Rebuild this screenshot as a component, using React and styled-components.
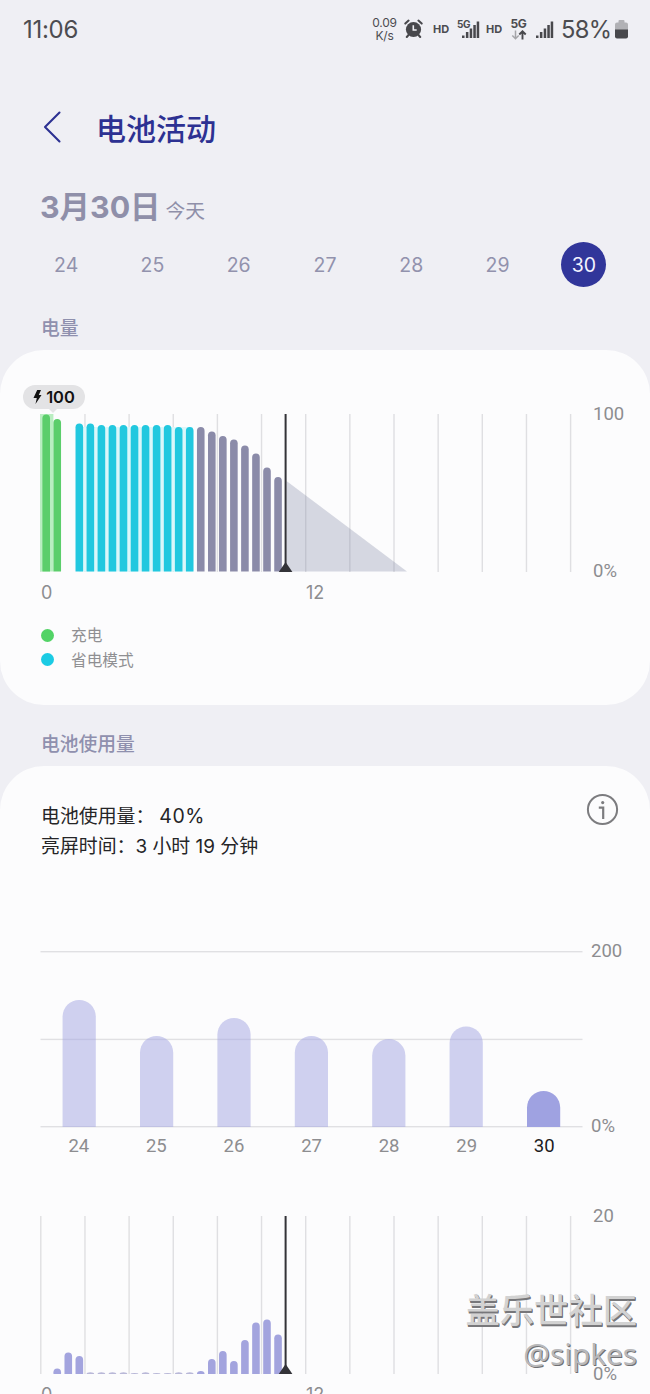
import React from "react";
import styled, { createGlobalStyle } from "styled-components";

const GlobalStyle = createGlobalStyle`
  * {
    box-sizing: border-box;
  }

  body {
    margin: 0;
    background: #efeff4;
    font-family: Inter, "Noto Sans CJK SC", sans-serif;
  }

  svg {
    display: block;
    flex: none;
  }
`;

const Screen = styled.div`
  position: relative;
  width: 650px;
  height: 1394px;
  overflow: hidden;
  display: flex;
  flex-direction: column;
  background: #efeff4;
  white-space: nowrap;

  > * {
    flex-shrink: 0;
  }
`;

const StatusBar = styled.header`
  display: flex;
  align-items: center;
  height: 58px;
  padding: 0 22px 0 23px;
  color: #4c4c50;
`;

const Clock = styled.div`
  flex: 1;
  font-size: 24px;
  letter-spacing: -0.3px;
`;

const NetSpeed = styled.div`
  width: 27px;
  margin-right: 6px;
  font-size: 12px;
  line-height: 13px;
  letter-spacing: -0.2px;
  text-align: center;
`;

const Hd = styled.span`
  width: 17px;
  margin: 0 ${(p) => p.$right}px 0 ${(p) => p.$left}px;
  font-size: 11px;
  font-weight: 700;
`;

const Network = styled.div`
  display: flex;
  align-items: ${(p) => (p.$stacked ? "center" : "flex-start")};
  flex-direction: ${(p) => (p.$stacked ? "column" : "row")};
  width: ${(p) => p.$width}px;
  height: 23px;
  font-size: ${(p) => p.$size}px;
  line-height: 12px;
  font-weight: 700;
  letter-spacing: -0.4px;
`;

const BatteryText = styled.span`
  width: 50px;
  margin: 0 4px 0 7px;
  font-size: 23.7px;
  letter-spacing: -0.6px;
`;

const TitleBar = styled.div`
  display: flex;
  align-items: center;
  height: 140px;
  padding: 0 0 2px 42px;
  color: #2d3192;
`;

const Title = styled.h1`
  margin: 0 0 0 34px;
  font-family: "Noto Sans CJK SC", sans-serif;
  font-size: 30px;
  font-weight: 500;
  line-height: 40px;
`;

const DateHeading = styled.div`
  display: flex;
  align-items: baseline;
  height: 44px;
  margin-top: -13px;
  padding-left: 40px;
  color: #8f8fa9;
  font-size: 30.4px;
  line-height: 44px;
  font-weight: 700;
`;

const Today = styled.span`
  margin-left: 5px;
  font-size: 19.8px;
  font-weight: 400;
`;

const DayPicker = styled.nav`
  display: flex;
  height: 45px;
  margin: 13px 23px 0;
`;

const DayCell = styled.div`
  flex: 1;
  display: flex;
  justify-content: center;
`;

const Day = styled.button`
  width: 45px;
  height: 45px;
  padding: 0;
  border: none;
  border-radius: 50%;
  background: ${(p) => (p.$active ? "#31369a" : "transparent")};
  color: ${(p) => (p.$active ? "#f4f4ff" : "#9292ad")};
  font-family: inherit;
  font-size: 19.5px;
`;

const SectionLabel = styled.h2`
  display: flex;
  align-items: center;
  height: ${(p) => p.$height}px;
  margin: 0;
  padding: ${(p) => p.$top}px 0 0 41px;
  color: #8f90ae;
  font-family: "Noto Sans CJK SC", sans-serif;
  font-size: 18.8px;
  font-weight: 500;
  line-height: 24px;
`;

const Card = styled.section`
  height: ${(p) => p.$height}px;
  padding-top: ${(p) => p.$top}px;
  border-radius: 44px;
  background: #fcfcfd;
`;

const ChartRow = styled.div`
  position: relative;
  display: flex;
  height: ${(p) => p.$height}px;
  padding-left: 40px;
`;

const ValueAxis = styled.div`
  display: flex;
  flex-direction: column;
  justify-content: space-between;
  height: ${(p) => p.$height}px;
  margin: -10px 0 0 ${(p) => p.$left}px;
  color: #8d8d90;
  font-family: Roboto, sans-serif;
  font-size: 18.5px;
  line-height: 20px;
`;

const HourAxis = styled.div`
  display: flex;
  height: 24px;
  margin-top: 9px;
  padding-left: 41px;
  color: #8d8d90;
  font-size: 18px;
  line-height: 24px;
`;

const Hour = styled.span`
  width: 265px;
`;

const Charged = styled.div`
  position: absolute;
  left: 23px;
  top: -29px;
  display: flex;
  align-items: center;
  justify-content: center;
  gap: 4px;
  width: 62px;
  height: 24px;
  border-radius: 12px;
  background: #e3e3e5;
  color: #111;
  font-size: 16.5px;
  font-weight: 600;

  &::after {
    content: "";
    position: absolute;
    left: 26px;
    top: 24px;
    border: 4px solid transparent;
    border-top-color: #e3e3e5;
    border-bottom: none;
  }
`;

const Legend = styled.ul`
  display: flex;
  flex-direction: column;
  margin: 18px 0 0;
  padding: 0 0 0 41px;
  list-style: none;
`;

const LegendItem = styled.li`
  display: flex;
  align-items: center;
  gap: 17px;
  height: 24.6px;
  color: #8f8f92;
  font-family: "Noto Sans CJK SC", sans-serif;
  font-size: 15.7px;
  line-height: 24px;
`;

const Dot = styled.span`
  width: 13px;
  height: 13px;
  border-radius: 50%;
  background: ${(p) => p.$color};
`;

const UsageHeader = styled.div`
  display: flex;
  justify-content: space-between;
  align-items: flex-start;
  height: 158px;
  padding: 0 31px 0 41px;
`;

const UsageText = styled.div`
  margin-top: 9px;
  color: #252527;
  font-size: 18.9px;
  line-height: 29.5px;
`;

const Percent = styled.span`
  margin-left: 5px;
  font-size: 19.5px;
  letter-spacing: 0.5px;
`;

const DayAxis = styled.div`
  display: flex;
  width: 543px;
  height: 24px;
  margin: 6px 0 0 40px;
  font-family: Roboto, sans-serif;
  font-size: 18.5px;
  line-height: 24px;
`;

const DayTick = styled.span`
  flex: 1;
  color: ${(p) => (p.$active ? "#1c1c1e" : "#8d8d90")};
  text-align: center;
`;

const HourlyUsage = styled.div`
  margin-top: 58px;
`;

const Watermark = styled.div`
  position: absolute;
  right: 13px;
  top: 1285px;
  display: flex;
  flex-direction: column;
  align-items: flex-end;
  color: #d2d2d2;
  font-family: "Noto Sans CJK SC", sans-serif;
  font-size: 34.3px;
  font-weight: 500;
  line-height: 46px;
  text-shadow: 1px 1px 0 #77777a, 1px 2px 0 #77777a;
`;

const WatermarkUser = styled.span`
  font-family: "Noto Sans", sans-serif;
  font-size: 29.7px;
  font-weight: 400;
  color: #b8b8ba;
  text-shadow: 1px 1px 0 #6f6f72;
`;

const days = [24, 25, 26, 27, 28, 29, 30];
const dailyTops = [49, 85, 67, 85, 88, 75.5, 140];

const SLOT = 11.04;
const GREEN = "#5bce6b";
const CYAN = "#22c8df";
const SLATE = "#8b8ba9";

const levels = [
  0.5, 5, null, 9.5, 9.5, 11, 11, 11, 11, 11, 11, 11, 13, 13, 13, 17.5, 22,
  25.5, 31.5, 39.5, 53.5, 63,
];

const hourly = [
  null, 5.5, 21.5, 18, 1.8, 1.8, 1.8, 1.8, 1, 1.8, 1, 1, 1.8, 1.8, 3, 15, 23,
  13, 34, 51.5, 54.5, 39.5,
];

const levelColor = (i) => {
  if (i < 2) return GREEN;
  return i < 14 ? CYAN : SLATE;
};

// bar with a rounded top and a square foot
const barPath = (x, y, w, bottom) => {
  const r = Math.min(w / 2, bottom - y);
  return `M${x} ${bottom}V${y + r}A${w / 2} ${r} 0 0 1 ${x + w} ${y + r}V${bottom}Z`;
};

const GridLines = () =>
  Array.from({ length: 13 }, (_, i) => (
    <rect key={i} x={0.1 + i * 44.15} y="0" width="1.4" height="158" fill="#dfdfe2" />
  ));

const NowMarker = () => (
  <g fill="#333338">
    <rect x="244.6" y="0" width="2" height="155" />
    <path d="M245.6 148L252.4 158H238.8Z" />
  </g>
);

const LevelChart = () => (
  <svg width="543" height="158">
    <GridLines />
    <rect x="0" y="0" width="13.4" height="157.5" fill="#b9eec1" />
    <rect x="39" y="13" width="114" height="144.5" fill="#dbf7fa" />
    <path d="M246.5 67L367 157.5H246.5Z" fill="#8b8fab" fillOpacity="0.34" />
    {levels.map(
      (top, i) =>
        top !== null && (
          <path
            key={i}
            d={barPath(2.4 + i * SLOT, top, 7.6, 157.5)}
            fill={levelColor(i)}
          />
        )
    )}
    <NowMarker />
  </svg>
);

const DailyChart = () => (
  <svg width="543" height="177">
    {[0.5, 88.2, 175.5].map((y) => (
      <rect key={y} x="0.5" y={y - 0.5} width="542" height="1.4" fill="#e0e0e3" />
    ))}
    {dailyTops.map((top, i) => (
      <path
        key={i}
        d={barPath(22.6 + i * 77.4, top, 33.2, 176)}
        fill={i === 6 ? "#9fa2e1" : "#a4a6e2"}
        fillOpacity={i === 6 ? 1 : 0.52}
      />
    ))}
  </svg>
);

const HourlyChart = () => (
  <svg width="543" height="158">
    <GridLines />
    {hourly.map(
      (h, i) =>
        h !== null && (
          <path
            key={i}
            d={barPath(2.4 + i * SLOT, 158 - h, 7.6, 158)}
            fill={h < 2 ? "#b9b8d8" : "#a3a4de"}
          />
        )
    )}
    <NowMarker />
  </svg>
);

const AlarmIcon = () => (
  <svg width="19" height="20" viewBox="0 0 19 20">
    <circle cx="9.5" cy="10.5" r="7.6" fill="#48484c" />
    <path d="M1.3 4.6L4.6 1.6M17.7 4.6L14.4 1.6M4.5 16L2.8 18M14.5 16L16.2 18" stroke="#48484c" strokeWidth="2" strokeLinecap="round" />
    <path d="M9.3 6.3V11H12.7" fill="none" stroke="#efeff4" strokeWidth="1.6" />
  </svg>
);

const SignalBars = styled.svg`
  margin: 2px 0 0 ${(p) => p.$left}px;
  fill: #48484c;
`;

const SignalIcon = ({ left }) => (
  <SignalBars $left={left} width="18" height="18" viewBox="0 0 18 18">
    <rect x="0" y="14.5" width="2.5" height="2.5" />
    <rect x="3.9" y="11" width="2.5" height="6" />
    <rect x="7.7" y="7.5" width="2.5" height="9.5" />
    <rect x="11.3" y="4" width="2.5" height="13" />
    <rect x="14.7" y="0.5" width="2.5" height="16.5" />
  </SignalBars>
);

const DataArrows = () => (
  <svg width="16" height="10" viewBox="0 0 16 10" fill="none">
    <path d="M4.5 0.5V8.5M1.3 5.5L4.5 8.7L7.7 5.5" stroke="#a5a5a9" strokeWidth="1.5" />
    <path d="M11.5 9.5V1.5M8.3 4.5L11.5 1.3L14.7 4.5" stroke="#48484c" strokeWidth="1.9" />
  </svg>
);

const BatteryIcon = () => (
  <svg width="13" height="19" viewBox="0 0 13 19">
    <path d="M3.5 2.5V1a1 1 0 0 1 1-1h4a1 1 0 0 1 1 1v1.5h1.5a2 2 0 0 1 2 2V10H0V4.5a2 2 0 0 1 2-2Z" fill="#b1b1b5" />
    <path d="M0 9.5H13V16.5a2 2 0 0 1-2 2H2a2 2 0 0 1-2-2Z" fill="#48484c" />
  </svg>
);

const BackIcon = () => (
  <svg width="20" height="34" viewBox="0 0 20 34" fill="none">
    <path d="M17.5 2.5L3 17L17.5 31.5" stroke="#2d3192" strokeWidth="2.1" strokeLinecap="round" strokeLinejoin="round" />
  </svg>
);

const BoltIcon = () => (
  <svg width="9" height="14" viewBox="0 0 9 14">
    <path d="M4.2 0H8L5.8 5H8.5L2.5 14L3.8 8H0.5Z" fill="#111" />
  </svg>
);

const InfoIcon = () => (
  <svg width="33" height="33" viewBox="0 0 33 33" fill="none" stroke="#7c7c7f">
    <circle cx="16.5" cy="16.5" r="14.6" strokeWidth="2" />
    <path d="M12.8 14.7H17.2V26" strokeWidth="2.2" />
    <circle cx="16.7" cy="9.6" r="1.6" fill="#7c7c7f" stroke="none" />
  </svg>
);

const HourLabels = () => (
  <HourAxis>
    <Hour>0</Hour>
    <Hour>12</Hour>
  </HourAxis>
);

const App = () => (
  <Screen>
    <GlobalStyle />
    <StatusBar>
      <Clock>11:06</Clock>
      <NetSpeed>
        0.09
        <br />
        K/s
      </NetSpeed>
      <AlarmIcon />
      <Hd $left={10} $right={7}>HD</Hd>
      <Network $width={12} $size={10}>5G</Network>
      <SignalIcon left={-7} />
      <Hd $left={6} $right={7}>HD</Hd>
      <Network $stacked $width={17} $size={12}>
        5G
        <DataArrows />
      </Network>
      <SignalIcon left={9} />
      <BatteryText>58%</BatteryText>
      <BatteryIcon />
    </StatusBar>

    <TitleBar>
      <BackIcon />
      <Title>电池活动</Title>
    </TitleBar>

    <DateHeading>
      3月30日<Today>今天</Today>
    </DateHeading>
    <DayPicker>
      {days.map((day) => (
        <DayCell key={day}>
          <Day $active={day === 30}>{day}</Day>
        </DayCell>
      ))}
    </DayPicker>

    <SectionLabel $height={63} $top={17}>电量</SectionLabel>
    <Card $height={355} $top={64}>
      <ChartRow $height={158}>
        <LevelChart />
        <ValueAxis $height={177} $left={10}>
          <span>100</span>
          <span>0%</span>
        </ValueAxis>
        <Charged>
          <BoltIcon />
          100
        </Charged>
      </ChartRow>
      <HourLabels />
      <Legend>
        <LegendItem>
          <Dot $color="#52d366" />
          充电
        </LegendItem>
        <LegendItem>
          <Dot $color="#1bcbe4" />
          省电模式
        </LegendItem>
      </Legend>
    </Card>

    <SectionLabel $height={61} $top={14}>电池使用量</SectionLabel>
    <Card $height={740} $top={27}>
      <UsageHeader>
        <UsageText>
          电池使用量：<Percent>40%</Percent>
          <br />
          亮屏时间：3 小时 19 分钟
        </UsageText>
        <InfoIcon />
      </UsageHeader>
      <ChartRow $height={177}>
        <DailyChart />
        <ValueAxis $height={195} $left={8}>
          <span>200</span>
          <span>0%</span>
        </ValueAxis>
      </ChartRow>
      <DayAxis>
        {days.map((day) => (
          <DayTick key={day} $active={day === 30}>
            {day}
          </DayTick>
        ))}
      </DayAxis>
      <HourlyUsage>
        <ChartRow $height={158}>
          <HourlyChart />
          <ValueAxis $height={178} $left={10}>
            <span>20</span>
            <span>0%</span>
          </ValueAxis>
        </ChartRow>
        <HourLabels />
      </HourlyUsage>
    </Card>

    <Watermark>
      盖乐世社区
      <WatermarkUser>@sipkes</WatermarkUser>
    </Watermark>
  </Screen>
);

export default App;
